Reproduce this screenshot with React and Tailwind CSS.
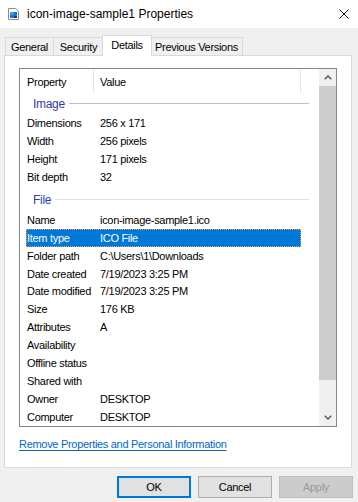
import React from 'react';

const imageRows = [
  ['Dimensions', '256 x 171'],
  ['Width', '256 pixels'],
  ['Height', '171 pixels'],
  ['Bit depth', '32'],
];

const fileRows = [
  ['Name', 'icon-image-sample1.ico'],
  ['Item type', 'ICO File'],
  ['Folder path', 'C:\\Users\\1\\Downloads'],
  ['Date created', '7/19/2023 3:25 PM'],
  ['Date modified', '7/19/2023 3:25 PM'],
  ['Size', '176 KB'],
  ['Attributes', 'A'],
  ['Availability', ''],
  ['Offline status', ''],
  ['Shared with', ''],
  ['Owner', 'DESKTOP'],
  ['Computer', 'DESKTOP'],
];

function Row({ label, value, selected }) {
  return (
    <div
      className={
        'ml-[6px] w-[275px] h-[18px] flex items-center border ' +
        (selected ? 'bg-[#0078d7] text-white border-dotted border-[#e8a050]' : 'border-transparent')
      }
    >
      <span className="w-[73px] shrink-0 whitespace-nowrap">{label}</span>
      <span className="whitespace-nowrap">{value}</span>
    </div>
  );
}

function Group({ title, tall, line }) {
  return (
    <div className={'flex items-center pl-[13px] pr-[10px] ' + (tall ? 'h-[25px] pt-[3px]' : 'h-[20px]')}>
      <span className="text-[#2a3dab] text-[12px]">{title}</span>
      <div className={'flex-1 h-px ml-[4px] ' + line} />
    </div>
  );
}

function Chevron({ down }) {
  return (
    <svg width="8" height="5" viewBox="0 0 8 5">
      <path
        d={down ? 'M0.8 0.8 L4 4 L7.2 0.8' : 'M0.8 4.2 L4 1 L7.2 4.2'}
        fill="none"
        stroke="#606060"
        strokeWidth="1.6"
      />
    </svg>
  );
}

function Tab({ label, w, selected, extra }) {
  if (selected) {
    return (
      <div className={'relative z-20 h-[21px] bg-white border-t border-x border-[#d9d9d9] flex items-center justify-center pb-[3px] ' + w + ' ' + extra}>
        {label}
      </div>
    );
  }
  return (
    <div className={'h-[18px] mb-px bg-[#f0f0f0] border-t border-x border-[#d9d9d9] flex items-center justify-center ' + w + ' ' + extra}>
      {label}
    </div>
  );
}

export default function App() {
  return (
    <div className="w-[358px] h-[502px] bg-[#f0f0f0] flex flex-col overflow-hidden text-[11px] leading-[14px] text-black font-['Liberation_Sans',Arial,sans-serif] tracking-[-0.3px]">
      {/* title bar */}
      <div className="h-[28px] bg-white flex items-center pl-[8px] pr-[9px] shrink-0">
        <svg width="11" height="12" viewBox="0 0 11 12">
          <path d="M0.5 0.5 H7.5 L10.5 3.5 V11.5 H0.5 Z" fill="#fff" stroke="#8a8a8a" />
          <rect x="2" y="4" width="7" height="6" fill="#1f6fc4" />
          <rect x="2" y="4" width="4" height="3" fill="#3a9be0" />
          <rect x="6" y="8" width="3" height="2" fill="#0d3f80" />
        </svg>
        <span className="ml-[8px] text-[12px] tracking-normal">icon-image-sample1 Properties</span>
        <svg className="ml-auto" width="10" height="10" viewBox="0 0 10 10">
          <path d="M0.5 0.5 L9.5 9.5 M9.5 0.5 L0.5 9.5" stroke="#111" strokeWidth="1" />
        </svg>
      </div>

      {/* tabs */}
      <div className="relative z-10 mt-[7px] -mb-px h-[21px] flex items-end pl-[5px] shrink-0">
        <Tab label="General" w="w-[49px]" />
        <Tab label="Security" w="w-[51px]" extra="-ml-px" />
        <Tab label="Details" w="w-[50px]" extra="-ml-[2px]" selected />
        <Tab label="Previous Versions" w="w-[93px]" extra="-ml-[2px]" />
      </div>

      {/* panel */}
      <div className="ml-[4px] w-[348px] h-[413px] shrink-0 bg-white border border-[#d9d9d9] flex flex-col">
        <div className="ml-[14px] mt-[12px] w-[318px] h-[359px] border border-[#828790] flex overflow-hidden">
          <div className="flex-1 flex flex-col overflow-hidden">
            <div className="h-[25px] shrink-0 flex">
              <div className="w-[74px] pl-[7px] flex items-center border-r border-[#e5e5e5] my-px">Property</div>
              <div className="w-[207px] pl-[6px] flex items-center border-r border-[#e5e5e5] my-px">Value</div>
            </div>
            <Group title="Image" line="bg-[#b9c0d6]" />
            {imageRows.map(([l, v]) => (
              <Row key={l} label={l} value={v} />
            ))}
            <Group title="File" tall line="bg-[#dde1ec]" />
            {fileRows.map(([l, v]) => (
              <Row key={l} label={l} value={v} selected={l === 'Item type'} />
            ))}
          </div>
          <div className="w-[17px] shrink-0 bg-[#f0f0f0] flex flex-col">
            <div className="h-[17px] flex items-center justify-center">
              <Chevron />
            </div>
            <div className="h-[294px] bg-[#cdcdcd]" />
            <div className="flex-1" />
            <div className="h-[17px] flex items-center justify-center">
              <Chevron down />
            </div>
          </div>
        </div>
        <div className="ml-[14px] mt-[10px]">
          <span className="text-[#0066cc] underline underline-offset-2">Remove Properties and Personal Information</span>
        </div>
      </div>

      {/* buttons */}
      <div className="mt-[8px] flex justify-end gap-[7px] pr-[5px]">
        <button className="w-[74px] h-[22px] bg-[#e1e1e1] border-2 border-[#0078d7] flex items-center justify-center">OK</button>
        <button className="w-[74px] h-[22px] bg-[#e1e1e1] border border-[#adadad] flex items-center justify-center">Cancel</button>
        <button className="w-[74px] h-[22px] bg-[#cccccc] border border-[#bfbfbf] text-[#9a9a9a] flex items-center justify-center">Apply</button>
      </div>
    </div>
  );
}
